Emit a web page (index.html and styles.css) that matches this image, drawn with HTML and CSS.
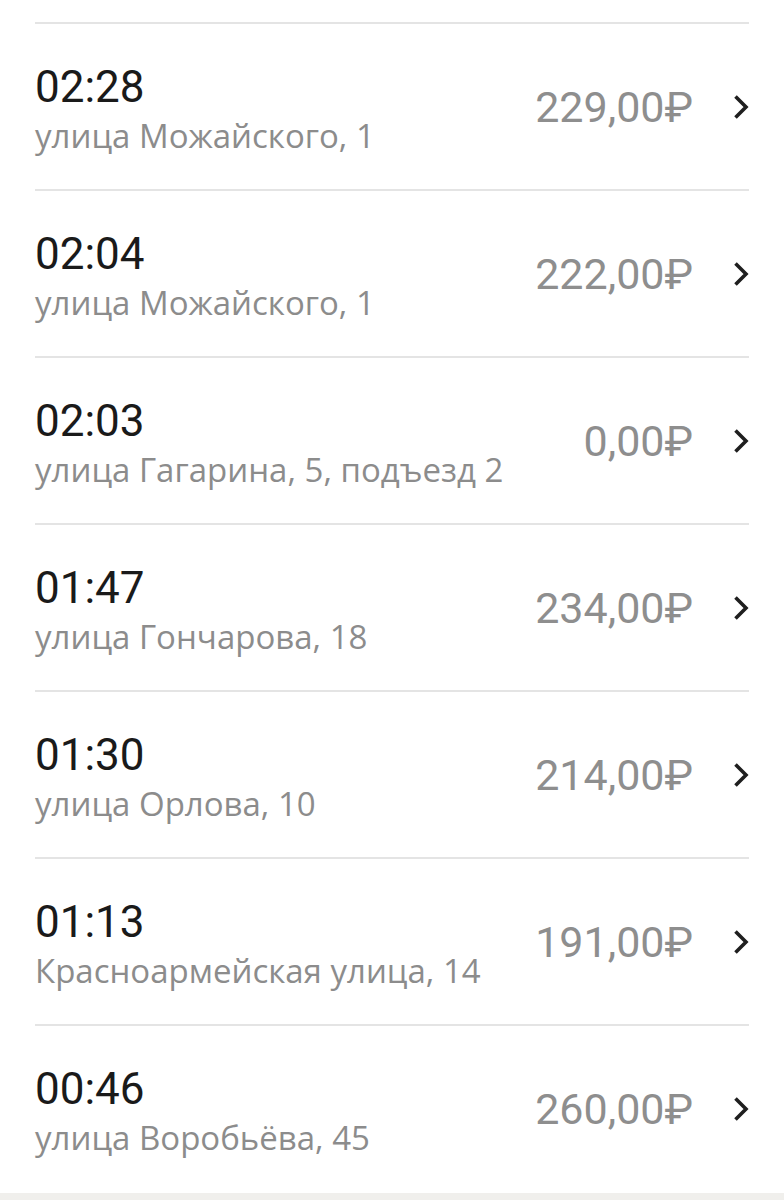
FILE: index.html
```html
<!DOCTYPE html>
<html>
<head>
    <meta charset="UTF-8">
    <title>Поездки</title>
    <link rel="stylesheet" href="styles.css">
</head>
<body>

    <div class="l-orders">
        <div class="order">
            <div class="order__info">
                <div class="order__time">02:28</div>
                <div class="order__address">улица Можайского, 1</div>
            </div>
            <div class="order__price">229,00₽</div>
            <svg class="order__arrow" viewBox="0 0 16 26"><path d="M2.5 2.5 L13 13 L2.5 23.5"/></svg>
        </div>
        <div class="order">
            <div class="order__info">
                <div class="order__time">02:04</div>
                <div class="order__address">улица Можайского, 1</div>
            </div>
            <div class="order__price">222,00₽</div>
            <svg class="order__arrow" viewBox="0 0 16 26"><path d="M2.5 2.5 L13 13 L2.5 23.5"/></svg>
        </div>
        <div class="order">
            <div class="order__info">
                <div class="order__time">02:03</div>
                <div class="order__address">улица Гагарина, 5, подъезд 2</div>
            </div>
            <div class="order__price">0,00₽</div>
            <svg class="order__arrow" viewBox="0 0 16 26"><path d="M2.5 2.5 L13 13 L2.5 23.5"/></svg>
        </div>
        <div class="order">
            <div class="order__info">
                <div class="order__time">01:47</div>
                <div class="order__address">улица Гончарова, 18</div>
            </div>
            <div class="order__price">234,00₽</div>
            <svg class="order__arrow" viewBox="0 0 16 26"><path d="M2.5 2.5 L13 13 L2.5 23.5"/></svg>
        </div>
        <div class="order">
            <div class="order__info">
                <div class="order__time">01:30</div>
                <div class="order__address">улица Орлова, 10</div>
            </div>
            <div class="order__price">214,00₽</div>
            <svg class="order__arrow" viewBox="0 0 16 26"><path d="M2.5 2.5 L13 13 L2.5 23.5"/></svg>
        </div>
        <div class="order">
            <div class="order__info">
                <div class="order__time">01:13</div>
                <div class="order__address">Красноармейская улица, 14</div>
            </div>
            <div class="order__price">191,00₽</div>
            <svg class="order__arrow" viewBox="0 0 16 26"><path d="M2.5 2.5 L13 13 L2.5 23.5"/></svg>
        </div>
        <div class="order">
            <div class="order__info">
                <div class="order__time">00:46</div>
                <div class="order__address">улица Воробьёва, 45</div>
            </div>
            <div class="order__price">260,00₽</div>
            <svg class="order__arrow" viewBox="0 0 16 26"><path d="M2.5 2.5 L13 13 L2.5 23.5"/></svg>
        </div>
    </div>

    <div class="l-bottom"></div>

</body>
</html>
```

FILE: styles.css
```css
BODY {
    margin: 0;
    background: #FFF;
    font-family: Roboto, "Noto Sans", sans-serif;
    }
.l-orders {
    padding: 22px 35px 0;
    }
.order {
    display: flex;
    align-items: center;
    height: 165px;
    border-top: 2px solid #E4E4E4;
    }
.order__info {
    flex: 1;
    margin-top: 5px;
    }
.order__time {
    font-size: 44px;
    line-height: 46px;
    color: #1A1A1A;
    }
.order__address {
    margin-top: 8px;
    font-family: "Open Sans", Roboto, sans-serif;
    font-size: 33px;
    line-height: 36px;
    color: #8C8C8C;
    }
.order__price {
    margin-right: 40px;
    font-size: 43px;
    color: #8E8E8E;
    }
.order__arrow {
    width: 16px;
    height: 26px;
    fill: none;
    stroke: #1F1F1F;
    stroke-width: 3.6;
    }
.l-bottom {
    height: 12px;
    margin-top: 2px;
    background: #F0EFEC;
    }
```
